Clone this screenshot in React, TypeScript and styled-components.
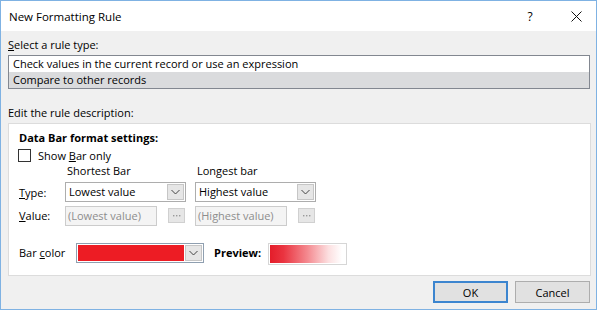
import React from "react";
import styled, { createGlobalStyle } from "styled-components";

const GlobalStyle = createGlobalStyle`
  html, body {
    margin: 0;
    padding: 0;
    background: #ffffff;
  }
  body {
    font-family: "Open Sans", "Noto Sans", sans-serif;
    font-size: 11px;
    color: #000000;
  }
`;

const Window = styled.div`
  width: 597px;
  height: 310px;
  box-sizing: border-box;
  border: 1px solid #7fb2e3;
  display: flex;
  flex-direction: column;
  background: #f0f0f0;
`;

const TitleBar = styled.div`
  height: 30px;
  background: #ffffff;
  display: flex;
  align-items: center;
  padding-left: 8px;
  font-size: 11.5px;
`;

const TitleText = styled.span`
  flex: 1;
`;

const CaptionButton = styled.div<{ $gap?: number }>`
  width: 40px;
  height: 30px;
  margin-right: ${(p) => p.$gap ?? 0}px;
  display: flex;
  align-items: center;
  justify-content: center;
  font-size: 12px;
`;

const Body = styled.div`
  flex: 1;
  display: flex;
  flex-direction: column;
  padding: 6px 6px 0 7px;
`;

const SectionLabel = styled.div<{ $top?: number }>`
  line-height: 16px;
  height: 16px;
  margin-top: ${(p) => p.$top ?? 0}px;
`;

const ListBox = styled.div`
  margin-top: 2px;
  width: 582px;
  box-sizing: border-box;
  border: 1px solid #828790;
  background: #ffffff;
`;

const ListRow = styled.div<{ $selected?: boolean }>`
  height: 16px;
  line-height: 16px;
  padding-left: 4px;
  background: ${(p) => (p.$selected ? "#dadbdd" : "#ffffff")};
`;

const Panel = styled.div`
  margin-top: 2px;
  width: 583px;
  height: 153px;
  box-sizing: border-box;
  border: 1px solid #dcdcdc;
  background: #ffffff;
  padding: 6px 10px 0 10px;
  display: flex;
  flex-direction: column;
`;

const Heading = styled.div`
  font-weight: 700;
  line-height: 16px;
  height: 16px;
`;

const CheckRow = styled.label`
  display: flex;
  align-items: center;
  height: 16px;
  margin-top: 1px;
  margin-left: -1px;
`;

const CheckBox = styled.span`
  width: 13px;
  height: 13px;
  box-sizing: border-box;
  border: 1px solid #333333;
  background: #ffffff;
  margin-right: 7px;
`;

const FieldGrid = styled.div`
  display: grid;
  grid-template-columns: 37px 121px 121px;
  column-gap: 9px;
  grid-template-rows: 16px 20px 20px;
  row-gap: 3px;
  align-items: center;
`;

const ColumnHeading = styled.div`
  line-height: 16px;
  padding-left: 2px;
`;

const RowLabel = styled.div`
  line-height: 16px;
  margin-top: 2px;
`;

const Combo = styled.div`
  height: 20px;
  box-sizing: border-box;
  border: 1px solid #adadad;
  background: #ffffff;
  display: flex;
  align-items: stretch;
`;

const ComboText = styled.div`
  flex: 1;
  padding-left: 3px;
  line-height: 18px;
`;

const DropButton = styled.div`
  width: 17px;
  margin: 1px;
  box-sizing: border-box;
  border: 1px solid #c6c6c6;
  background: #e6e6e6;
  display: flex;
  align-items: center;
  justify-content: center;
`;

const ValueCell = styled.div`
  display: flex;
  align-items: center;
  margin-top: 1px;
`;

const DisabledBox = styled.div`
  width: 92px;
  height: 20px;
  box-sizing: border-box;
  border: 1px solid #cccccc;
  background: #f4f4f4;
  color: #8d8d8d;
  line-height: 18px;
  padding-left: 2px;
`;

const EllipsisButton = styled.div`
  width: 17px;
  height: 15px;
  margin-left: 11px;
  box-sizing: border-box;
  border: 1px solid #d0d0d0;
  background: #e6e6e6;
  display: flex;
  align-items: center;
  justify-content: center;
`;

const ColorRow = styled.div`
  display: flex;
  align-items: flex-start;
  margin-top: 18px;
`;

const ColorLabel = styled.div`
  width: 57px;
  line-height: 20px;
`;

const ColorCombo = styled(Combo)`
  width: 128px;
  border-color: #8f9fb0;
`;

const Swatch = styled.div<{ $color: string }>`
  flex: 1;
  margin: 1px 0 1px 1px;
  background: ${(p) => p.$color};
`;

const PreviewLabel = styled.div`
  width: 54px;
  margin-left: 10px;
  font-weight: 700;
  line-height: 20px;
`;

const PreviewBox = styled.div`
  width: 79px;
  height: 22px;
  box-sizing: border-box;
  border: 1px solid #d6d6d6;
  padding: 1px;
`;

const PreviewBar = styled.div`
  height: 100%;
  background: linear-gradient(
    to right,
    #e41d2a 0%,
    #ea3440 18%,
    #f48a90 50%,
    #fcdfe0 78%,
    #ffffff 96%
  );
`;

const Footer = styled.div`
  display: flex;
  justify-content: flex-end;
  gap: 7px;
  padding-top: 5px;
  padding-right: 0;
`;

const DialogButton = styled.div<{ $default?: boolean }>`
  width: 75px;
  height: 22px;
  box-sizing: border-box;
  border: ${(p) => (p.$default ? "2px solid #3c85cf" : "1px solid #adadad")};
  background: #e1e1e1;
  display: flex;
  align-items: center;
  justify-content: center;
`;

const Chevron = () => (
  <svg width="9" height="6" viewBox="0 0 9 6">
    <polyline points="0.5,1 4.5,5 8.5,1" fill="none" stroke="#444" strokeWidth="1" />
  </svg>
);

const Dots = () => (
  <svg width="9" height="3" viewBox="0 0 9 3">
    <rect x="1" y="1" width="1.4" height="1.4" fill="#9a9a9a" />
    <rect x="4" y="1" width="1.4" height="1.4" fill="#9a9a9a" />
    <rect x="7" y="1" width="1.4" height="1.4" fill="#9a9a9a" />
  </svg>
);

const CloseIcon = () => (
  <svg width="11" height="11" viewBox="0 0 11 11">
    <path d="M0.5 0.5 L10.5 10.5 M10.5 0.5 L0.5 10.5" stroke="#111" strokeWidth="1" fill="none" />
  </svg>
);

export default function App() {
  return (
    <>
      <GlobalStyle />
      <Window>
        <TitleBar>
          <TitleText>New Formatting Rule</TitleText>
          <CaptionButton $gap={6}>?</CaptionButton>
          <CaptionButton>
            <CloseIcon />
          </CaptionButton>
        </TitleBar>
        <Body>
          <SectionLabel>
            <u>S</u>elect a rule type:
          </SectionLabel>
          <ListBox>
            <ListRow>Check values in the current record or use an expression</ListRow>
            <ListRow $selected>Compare to other records</ListRow>
          </ListBox>
          <SectionLabel $top={16}>Edit the rule description:</SectionLabel>
          <Panel>
            <Heading>Data Bar format settings:</Heading>
            <CheckRow>
              <CheckBox />
              <span>
                Show <u>B</u>ar only
              </span>
            </CheckRow>
            <FieldGrid>
              <span />
              <ColumnHeading>Shortest Bar</ColumnHeading>
              <ColumnHeading>Longest bar</ColumnHeading>

              <RowLabel>
                <u>T</u>ype:
              </RowLabel>
              <Combo>
                <ComboText>Lowest value</ComboText>
                <DropButton>
                  <Chevron />
                </DropButton>
              </Combo>
              <Combo>
                <ComboText>Highest value</ComboText>
                <DropButton>
                  <Chevron />
                </DropButton>
              </Combo>

              <RowLabel>
                <u>V</u>alue:
              </RowLabel>
              <ValueCell>
                <DisabledBox>(Lowest value)</DisabledBox>
                <EllipsisButton>
                  <Dots />
                </EllipsisButton>
              </ValueCell>
              <ValueCell>
                <DisabledBox>(Highest value)</DisabledBox>
                <EllipsisButton>
                  <Dots />
                </EllipsisButton>
              </ValueCell>
            </FieldGrid>
            <ColorRow>
              <ColorLabel>
                Bar <u>c</u>olor
              </ColorLabel>
              <ColorCombo>
                <Swatch $color="#ed1c24" />
                <DropButton>
                  <Chevron />
                </DropButton>
              </ColorCombo>
              <PreviewLabel>Preview:</PreviewLabel>
              <PreviewBox>
                <PreviewBar />
              </PreviewBox>
            </ColorRow>
          </Panel>
          <Footer>
            <DialogButton $default>OK</DialogButton>
            <DialogButton>Cancel</DialogButton>
          </Footer>
        </Body>
      </Window>
    </>
  );
}
